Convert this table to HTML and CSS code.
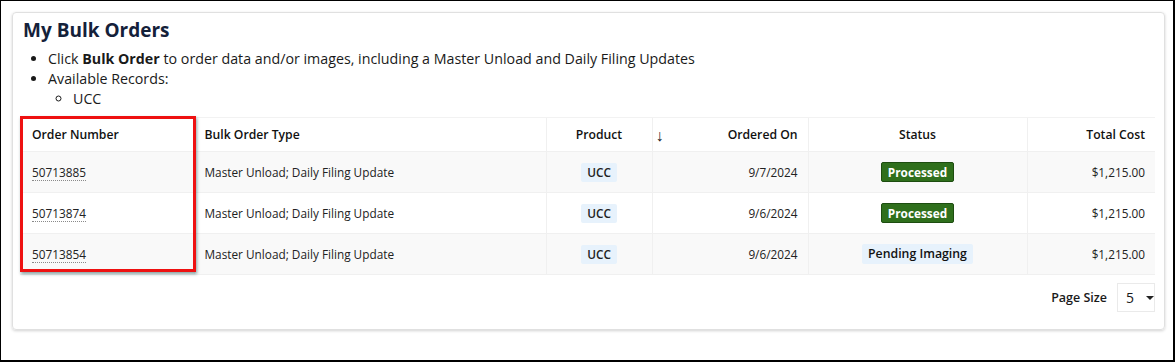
FILE: index.html
```html
<!DOCTYPE html>
<html lang="en">
<head>
    <meta charset="UTF-8">
    <meta name="viewport" content="width=device-width, initial-scale=1.0">
    <title>My Bulk Orders</title>
    <link rel="stylesheet" href="styles.css">
</head>
<body>
    <div class="frame">
        <div class="card">
            <h1>My Bulk Orders</h1>
            <ul class="notes">
                <li>Click <strong>Bulk Order</strong> to order data and/or images, including a Master Unload and Daily Filing Updates</li>
                <li>Available Records:
                    <ul>
                        <li>UCC</li>
                    </ul>
                </li>
            </ul>

            <div class="table-wrap">
                <table class="orders">
                    <colgroup>
                        <col style="width: 174px">
                        <col style="width: 352px">
                        <col style="width: 106px">
                        <col style="width: 156px">
                        <col style="width: 219px">
                        <col>
                    </colgroup>
                    <thead>
                        <tr>
                            <th>Order Number</th>
                            <th>Bulk Order Type</th>
                            <th class="center">Product</th>
                            <th class="right sorted"><span class="sort-arrow">&#8595;</span>Ordered On</th>
                            <th class="center">Status</th>
                            <th class="right">Total Cost</th>
                        </tr>
                    </thead>
                    <tbody>
                        <tr>
                            <td><a href="#">50713885</a></td>
                            <td>Master Unload; Daily Filing Update</td>
                            <td class="center"><span class="tag">UCC</span></td>
                            <td class="right">9/7/2024</td>
                            <td class="center"><span class="status done">Processed</span></td>
                            <td class="right">$1,215.00</td>
                        </tr>
                        <tr>
                            <td><a href="#">50713874</a></td>
                            <td>Master Unload; Daily Filing Update</td>
                            <td class="center"><span class="tag">UCC</span></td>
                            <td class="right">9/6/2024</td>
                            <td class="center"><span class="status done">Processed</span></td>
                            <td class="right">$1,215.00</td>
                        </tr>
                        <tr>
                            <td><a href="#">50713854</a></td>
                            <td>Master Unload; Daily Filing Update</td>
                            <td class="center"><span class="tag">UCC</span></td>
                            <td class="right">9/6/2024</td>
                            <td class="center"><span class="status pending">Pending Imaging</span></td>
                            <td class="right">$1,215.00</td>
                        </tr>
                    </tbody>
                </table>
                <!-- annotation box around the first column -->
                <div class="highlight"></div>
            </div>

            <div class="pager">
                <span class="pager-label">Page Size</span>
                <div class="page-select">
                    <span>5</span>
                    <span class="caret"></span>
                </div>
            </div>
        </div>
    </div>
</body>
</html>
```

FILE: styles.css
```css
html, body {
    margin: 0;
    padding: 0;
    background-color: #fff;
}
body {
    font-family: "Open Sans", "Liberation Sans", sans-serif;
    color: #1a1a1a;
}
.frame {
    box-sizing: border-box;
    width: 1175px;
    height: 362px;
    border: 1px solid #000;
    border-width: 1px 2px 2px 1px;
    padding: 11px 8px 0 11px;
}
.card {
    box-sizing: border-box;
    height: 318px;
    border: 1px solid #e0e0e0;
    border-radius: 4px;
    box-shadow: 0 1px 3px rgba(0, 0, 0, 0.18);
    padding: 3px 9px 0 7px;
}
h1 {
    margin: 0 0 0 3px;
    font-size: 19px;
    font-weight: 700;
    color: #14213a;
    line-height: 28px;
}
.notes {
    margin: 5px 0 0 0;
    padding-left: 28px;
    font-size: 14.25px;
    line-height: 20px;
}
.notes ul {
    margin: 0;
    padding-left: 25px;
    list-style-type: circle;
}
.notes strong {
    font-weight: 700;
}
.table-wrap {
    position: relative;
    margin-top: 8px;
}
.orders {
    width: 100%;
    table-layout: fixed;
    border-collapse: collapse;
    font-size: 11.8px;
}
.orders th,
.orders td {
    padding: 0 10px;
    text-align: left;
    border-left: 1px solid #f0f0f0;
    white-space: nowrap;
}
.orders th:first-child,
.orders td:first-child {
    border-left: none;
    padding-left: 12px;
}
.orders th {
    height: 33px;
    font-weight: 600;
    font-size: 12.2px;
    color: #111;
    border-top: 1px solid #f2f2f2;
    border-bottom: 1px solid #f0f0f0;
}
.orders td {
    height: 40px;
    border-bottom: 1px solid #f0f0f0;
    color: #222;
}
.orders tbody tr:nth-child(odd) {
    background-color: #f9f9f9;
}
.orders .center {
    text-align: center;
}
.orders .right {
    text-align: right;
}
.sorted {
    position: relative;
}
.sort-arrow {
    position: absolute;
    left: 3px;
    top: 6px;
    font-size: 16px;
    font-weight: 700;
    color: #222;
}
.orders a {
    color: #222;
    text-decoration: none;
    border-bottom: 1px dotted #8a8a8a;
}
.tag {
    display: inline-block;
    padding: 1px 6px;
    background-color: #e7f2fc;
    font-weight: 600;
    border-radius: 2px;
    line-height: 17px;
}
.status {
    display: inline-block;
    padding: 0 6px;
    line-height: 18px;
    font-weight: 600;
    border-radius: 2px;
}
.status.done {
    background-color: #2f6f1c;
    border: 1px solid #1d4d10;
    color: #fff;
    font-weight: 700;
}
.status.pending {
    background-color: #e7f2fc;
    color: #111;
    line-height: 20px;
    font-size: 12.3px;
}
.highlight {
    position: absolute;
    left: 0;
    top: -1px;
    width: 170px;
    height: 150px;
    border: 3px solid #ee1111;
    box-shadow: 1px 2px 3px rgba(0, 60, 60, 0.45);
    pointer-events: none;
}
.pager {
    display: flex;
    justify-content: flex-end;
    align-items: center;
    gap: 10px;
    margin-top: 8px;
}
.pager-label {
    font-size: 12.5px;
    font-weight: 600;
}
.page-select {
    box-sizing: border-box;
    display: flex;
    align-items: center;
    gap: 12px;
    width: 38px;
    height: 29px;
    padding-left: 8px;
    border: 1px solid #eaeaea;
    font-size: 14px;
}
.caret {
    width: 0;
    height: 0;
    border-left: 4px solid transparent;
    border-right: 4px solid transparent;
    border-top: 4px solid #222;
}
```
